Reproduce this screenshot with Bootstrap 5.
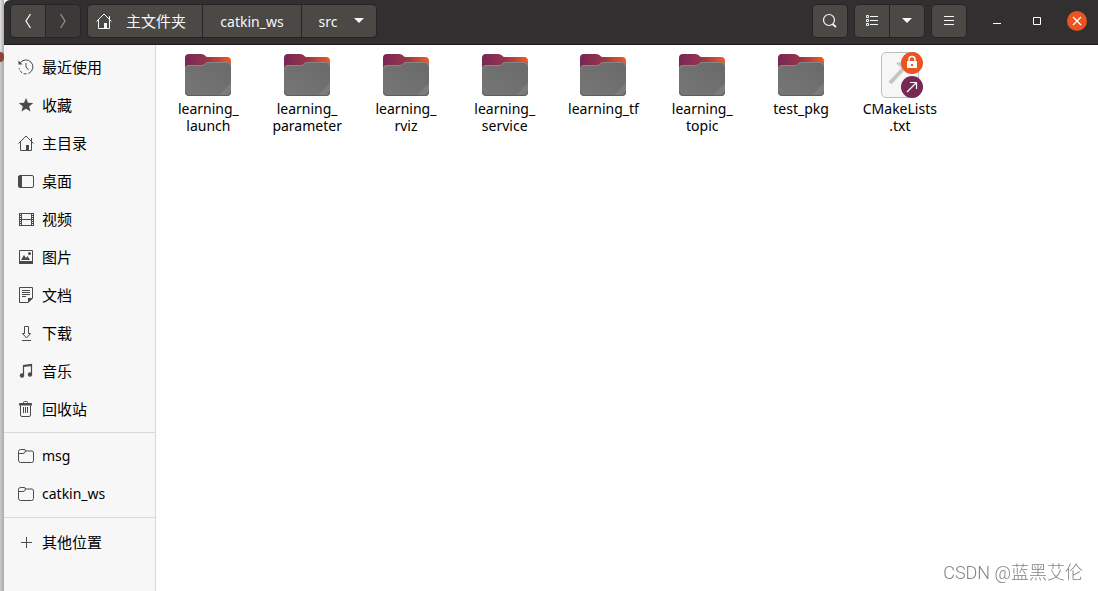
<!DOCTYPE html>
<html lang="zh-CN">
<head>
<meta charset="utf-8">
<meta name="viewport" content="width=device-width, initial-scale=1">
<title>src</title>
<link href="https://cdn.jsdelivr.net/npm/bootstrap@5.3.0/dist/css/bootstrap.min.css" rel="stylesheet">
<style>
body{font-family:"Noto Sans","Noto Sans CJK SC",sans-serif;font-size:14px;line-height:17px;color:#000;background:#fff}
.behind{width:4px;background:linear-gradient(90deg,#c9c9c9,#aaa)}
.behind-top{height:52px;background:linear-gradient(90deg,#e2e2e2,#aaa)}
.behind-dot{height:10px;background:#8e4436;border-radius:0 5px 5px 0}
.titlebar{height:45px;padding:4px 11px 6px 6px;gap:6px;background:#322f30;border-bottom:1px solid #1d1a1b;border-top-left-radius:6px}
.titlebar .btn{--bs-btn-color:#f7f7f7;--bs-btn-bg:#4a4946;--bs-btn-hover-color:#fff;--bs-btn-hover-bg:#565451;--bs-btn-disabled-color:#93918f;--bs-btn-disabled-bg:#3b3a39;--bs-btn-disabled-opacity:1;--bs-btn-border-radius:4px;--bs-btn-padding-x:0;--bs-btn-padding-y:0;font-size:14px;line-height:17px;height:32px;min-width:34px;display:flex;align-items:center;justify-content:center;border:0}
.tool-group{height:34px;border:1px solid #272425;border-radius:5px;background:#272425}
.tool-group>.btn+.btn{margin-left:1px!important}
.tools{gap:6px}
.window-controls{gap:20px;margin-left:14px}
.cjk{font-size:15px;line-height:20px}
.titlebar .path-home{width:114px;gap:14px;padding-right:8px}.path-ws{width:98px}.titlebar .path-src{width:74px;gap:17px;padding-left:5px}
.wc{width:20px;height:20px;border-radius:50%;background:transparent;color:#fff}
.wc-close{background:#e95420}
.places{width:152px;background:#f7f7f7;border-right:1px solid #d9d9d9;padding-top:3px}
.places .nav-link{height:38px;padding:0 0 0 14px;gap:8px;color:#000;font-size:15px;line-height:20px}
.places .latin{font-size:14px}
.places svg{color:#4a4a4a}
.rule{height:1px;margin:4px 0;background:#d9d9d9}
.rule-low{margin-bottom:5px}
.files{grid-template-columns:repeat(auto-fill,minmax(96px,1fr));padding:6px 50px 0 3px;align-content:start}
.file{color:#000;text-align:center}
.file svg{margin-bottom:1px}
.watermark{right:15px;bottom:6px;font-family:Roboto,"Noto Sans CJK SC",sans-serif;font-size:18px;font-weight:300;line-height:24px;color:#858585}
</style>
</head>
<body>
<svg width="0" height="0" class="position-absolute" aria-hidden="true">
<defs>
<linearGradient id="tab" x1="0" x2="1"><stop offset="0" stop-color="#782656"/><stop offset=".5" stop-color="#98364a"/><stop offset="1" stop-color="#f05a24"/></linearGradient>
<linearGradient id="face" x1="0" y1="1" x2="1" y2="0"><stop offset="0" stop-color="#777"/><stop offset="1" stop-color="#696969"/></linearGradient>
<symbol id="house" viewBox="0 0 16 16"><path d="M.5 8.500 8 1l7.500 7.500M2.500 7v8.500h11V7M13.500 3v3.500" fill="none" stroke="currentColor"/><path d="M8 10h3v5.500H8z" fill="currentColor"/></symbol>
<symbol id="caret" viewBox="0 0 10 6"><path d="M0 0h10L5 5z" fill="currentColor"/></symbol>
<symbol id="dir" viewBox="0 0 16 16"><path d="M.5 12V3.500Q.5 1.500 2.500 1.500H6Q7.500 1.500 7.500 3h6.500Q15.500 3 15.500 5v7.500Q15.500 14.500 13.500 14.500h-11Q.5 14.500.5 12zM.5 5.500h4.500Q7 5.500 7.500 3" fill="none" stroke="currentColor"/></symbol>
<symbol id="folder" viewBox="0 0 48 48"><path d="M1 20V7q0-4 4-4h12q3 0 4 1.500T24 6h19q4 0 4 4v10z" fill="url(#tab)"/><path d="M1 18q0-4 4-4h13q2 0 3-1.500T25 11h18q4 0 4 4v26q0 4-4 4H5q-4 0-4-4z" fill="url(#face)"/><path d="M47 32v9q0 4-4 4h-9z" fill="#7c7c7c"/><path d="M1.500 18q0-3.500 3.500-3.500h13q2 0 3-1.500t4-1.500h18q3.500 0 3.500 3.500" fill="none" stroke="#929292" stroke-width=".7"/><path d="M1.500 40.500q0 4 3.500 4h38q3.500 0 3.500-4" fill="none" stroke="#575757" stroke-width=".8"/></symbol>
</defs>
</svg>
<div class="d-flex vh-100 overflow-hidden">
<div class="behind flex-shrink-0"><div class="behind-top"></div><div class="behind-dot"></div></div>
<main class="d-flex flex-column flex-grow-1">
<header class="titlebar d-flex align-items-center">
<div class="tool-group btn-group flex-shrink-0" role="group" aria-label="导航">
<button class="btn" type="button" aria-label="后退"><svg width="8" height="16" viewBox="0 0 8 16"><path d="M6.500 1 2 8l4.500 7" fill="none" stroke="currentColor" stroke-width="1.300"/></svg></button>
<button class="btn" type="button" disabled aria-label="前进"><svg width="8" height="16" viewBox="0 0 8 16"><path d="M1.500 1 6 8l-4.500 7" fill="none" stroke="currentColor" stroke-width="1.300"/></svg></button>
</div>
<div class="tool-group btn-group me-auto flex-shrink-0" role="group" aria-label="路径">
<button class="btn path-home" type="button"><svg width="16" height="16"><use href="#house"/></svg><span class="cjk">主文件夹</span></button>
<button class="btn path-ws" type="button">catkin_ws</button>
<button class="btn path-src" type="button">src<svg width="10" height="6"><use href="#caret"/></svg></button>
</div>
<div class="tools d-flex align-items-center flex-shrink-0">
<div class="tool-group btn-group"><button class="btn" type="button" aria-label="搜索"><svg width="16" height="16" viewBox="0 0 16 16"><circle cx="7" cy="7" r="5.500" fill="none" stroke="currentColor" stroke-width="1.200"/><path d="m10.500 11 3.500 3" stroke="currentColor" stroke-width="1.800"/></svg></button></div>
<div class="tool-group btn-group"><button class="btn" type="button" aria-label="列表视图"><svg width="14" height="12" viewBox="0 0 14 12" fill="none" stroke="currentColor"><path d="M1.500.5h2v2h-2zM1.500 4.500h2v2h-2zM1.500 8.500h2v2h-2zM5 1.500h8M5 5.500h8M5 9.500h8"/></svg></button><button class="btn" type="button" aria-label="视图选项"><svg width="10" height="6"><use href="#caret"/></svg></button></div>
<div class="tool-group btn-group"><button class="btn" type="button" aria-label="菜单"><svg width="10" height="10" viewBox="0 0 10 10" stroke="currentColor"><path d="M0 .5h10M0 4.500h10M0 8.500h10"/></svg></button></div>
</div>
<div class="window-controls d-flex align-items-center flex-shrink-0">
<button class="wc border-0 p-0 d-flex" type="button" aria-label="最小化"><svg width="20" height="20" stroke="currentColor"><path d="M6 12.500h8"/></svg></button>
<button class="wc border-0 p-0 d-flex" type="button" aria-label="最大化"><svg width="20" height="20" stroke="currentColor" fill="none"><path d="M6.500 6.500h7v7h-7z"/></svg></button>
<button class="wc wc-close border-0 p-0 d-flex" type="button" aria-label="关闭"><svg width="20" height="20" stroke="currentColor" stroke-width="1.300"><path d="m6 6 8 8M14 6l-8 8"/></svg></button>
</div>
</header>
<div class="d-flex flex-grow-1">
<nav class="places flex-shrink-0 nav flex-column flex-nowrap" aria-label="位置">
<a class="nav-link d-flex align-items-center" href="#"><svg width="16" height="16" viewBox="0 0 16 16" fill="none" stroke="currentColor"><path d="M1.800 4.500A7 7 0 1 1 1 9" stroke-dasharray="27 1.500 3 1.500 3 1.500"/><path d="M8 4v4l2.500 3"/><path d="M.5 1.500v4h4z" fill="currentColor" stroke="none"/></svg>最近使用</a>
<a class="nav-link d-flex align-items-center" href="#"><svg width="16" height="16" viewBox="0 0 16 16"><path d="m8 1 2 4.700 5.200.4-4 3.400L12.500 14.500 8 11.800 3.500 14.500l1.300-5L.8 6.100 6 5.700z" fill="currentColor"/></svg>收藏</a>
<a class="nav-link d-flex align-items-center" href="#"><svg width="16" height="16"><use href="#house"/></svg>主目录</a>
<a class="nav-link d-flex align-items-center" href="#"><svg width="16" height="16" viewBox="0 0 16 16"><rect x=".5" y="2.500" width="15" height="12" rx="1.500" fill="none" stroke="currentColor"/><path d="M1 3h3v11H1z" fill="currentColor"/></svg>桌面</a>
<a class="nav-link d-flex align-items-center" href="#"><svg width="16" height="16" viewBox="0 0 16 16" fill="none" stroke="currentColor"><path d="M3.500 2v13M13.500 2v13M3.500 2.500h10M3.500 8.500h10M3.500 14.500h10"/><path d="M1.500 2v13M15.500 2v13"/><path d="M2.500 2v13M14.500 2v13" stroke-dasharray="1 1"/></svg>视频</a>
<a class="nav-link d-flex align-items-center" href="#"><svg width="16" height="16" viewBox="0 0 16 16"><path d="M1.500 1.500h13v13h-13z" fill="none" stroke="currentColor"/><path d="M1 12h14v3H1zM3 11l3-5 2 3 1.500-2 2.500 4z" fill="currentColor"/><circle cx="11.500" cy="4.500" r="1.500" fill="currentColor"/></svg>图片</a>
<a class="nav-link d-flex align-items-center" href="#"><svg width="16" height="16" viewBox="0 0 16 16"><path d="M1.500.5h13V11L10 15.500H1.500zM4 3.500h8M4 5.500h8M4 7.500h8M4 9.500h4" fill="none" stroke="currentColor"/><path d="M10 16v-5h5z" fill="currentColor"/></svg>文档</a>
<a class="nav-link d-flex align-items-center" href="#"><svg width="16" height="16" viewBox="0 0 16 16" fill="none" stroke="currentColor"><path d="M6.500 1.500h4v7h2l-4 4.500-4-4.500h2zM4 15.500h9"/></svg>下载</a>
<a class="nav-link d-flex align-items-center" href="#"><svg width="16" height="16" viewBox="0 0 16 16"><path d="M5.500 12V2.500l8-1V11M5.500 3.500l8-1" fill="none" stroke="currentColor" stroke-width="1.200"/><circle cx="4" cy="12.500" r="2.200" fill="currentColor"/><circle cx="12" cy="11.500" r="2.200" fill="currentColor"/></svg>音乐</a>
<a class="nav-link d-flex align-items-center" href="#"><svg width="16" height="16" viewBox="0 0 16 16" fill="none" stroke="currentColor"><path d="M5.500 2.500v-1q0-1 1-1h2q1 0 1 1v1M2.500 4.500V14q0 1.500 1.500 1.500h7q1.500 0 1.500-1.500V4.500M5.500 6v6M7.500 6v6M9.500 6v6"/><path d="M1 4.500V3q0-1 1-1h11q1 0 1 1v1.500z" fill="currentColor" stroke="none"/></svg>回收站</a>
<div class="rule"></div>
<a class="nav-link latin d-flex align-items-center" href="#"><svg width="16" height="16"><use href="#dir"/></svg>msg</a>
<a class="nav-link latin d-flex align-items-center" href="#"><svg width="16" height="16"><use href="#dir"/></svg>catkin_ws</a>
<div class="rule rule-low"></div>
<a class="nav-link d-flex align-items-center" href="#"><svg width="16" height="16" viewBox="0 0 16 16" stroke="currentColor"><path d="M3 8.500h11M8.500 3v11"/></svg>其他位置</a>
</nav>
<section class="files d-grid flex-grow-1" aria-label="文件">
<a class="file d-flex flex-column align-items-center text-decoration-none" href="#"><svg width="48" height="48"><use href="#folder"/></svg><span>learning_<br>launch</span></a>
<a class="file d-flex flex-column align-items-center text-decoration-none" href="#"><svg width="48" height="48"><use href="#folder"/></svg><span>learning_<br>parameter</span></a>
<a class="file d-flex flex-column align-items-center text-decoration-none" href="#"><svg width="48" height="48"><use href="#folder"/></svg><span>learning_<br>rviz</span></a>
<a class="file d-flex flex-column align-items-center text-decoration-none" href="#"><svg width="48" height="48"><use href="#folder"/></svg><span>learning_<br>service</span></a>
<a class="file d-flex flex-column align-items-center text-decoration-none" href="#"><svg width="48" height="48"><use href="#folder"/></svg><span>learning_tf</span></a>
<a class="file d-flex flex-column align-items-center text-decoration-none" href="#"><svg width="48" height="48"><use href="#folder"/></svg><span>learning_<br>topic</span></a>
<a class="file d-flex flex-column align-items-center text-decoration-none" href="#"><svg width="48" height="48"><use href="#folder"/></svg><span>test_pkg</span></a>
<a class="file d-flex flex-column align-items-center text-decoration-none" href="#"><svg width="48" height="48" viewBox="0 1 48 48" overflow="visible"><rect x="5.500" y="2.500" width="37" height="45" rx="4.500" fill="#f6f6f6" stroke="#bdbdbd"/><path d="m14 33 15-16" stroke="#c4c4c4" stroke-width="4"/><path d="m20 13q6-3 11 2l5 5-4 4z" fill="#c9c9c9"/><circle cx="36" cy="13" r="11" fill="#e95420"/><path d="M33 12V9.500q0-3 3-3t3 3V12" fill="none" stroke="#fff" stroke-width="1.500"/><path d="M31 11h10v7H31z" fill="#fff"/><path d="M35 14h2v2h-2z" fill="#e95420"/><circle cx="36" cy="37" r="11" fill="#772953"/><path d="m31 42 9.500-9.500M34 32.500h6.500V39" fill="none" stroke="#fff" stroke-width="1.200"/></svg><span>CMakeLists<br>.txt</span></a>
</section>
</div>
</main>
</div>
<div class="watermark position-fixed">CSDN @蓝黑艾伦</div>
<script src="https://cdn.jsdelivr.net/npm/bootstrap@5.3.0/dist/js/bootstrap.bundle.min.js"></script>
</body>
</html>
